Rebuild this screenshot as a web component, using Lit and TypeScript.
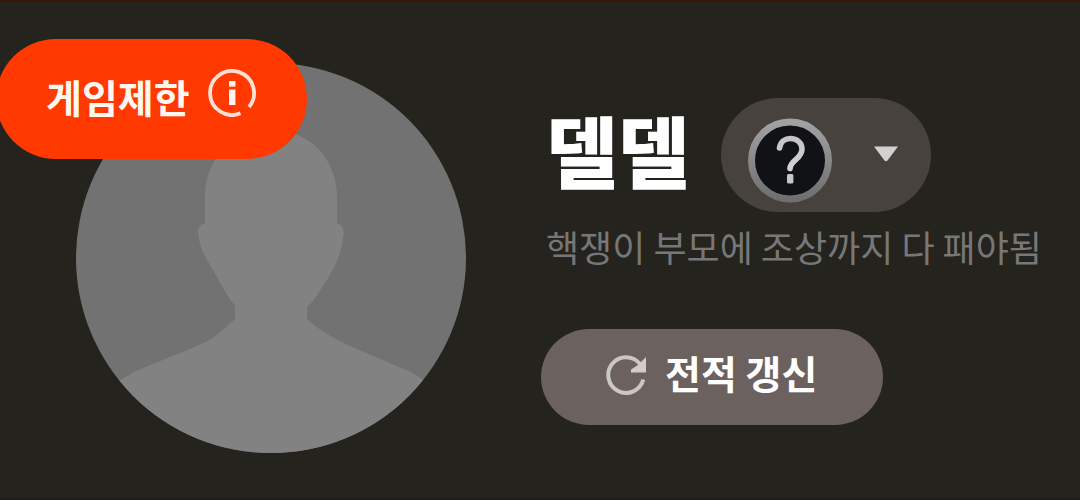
import { LitElement, html, css, svg } from "lit";
import { customElement, property } from "lit/decorators.js";

const infoIcon = svg`<svg class="info-icon" viewBox="0 0 48 48" aria-hidden="true">
  <path d="M32.500 44.300 A22 22 0 1 1 41 38" fill="none" stroke="#ffe0d4" stroke-width="3.8"/>
  <rect x="21" y="12" width="6.400" height="5.600" fill="#fff4ee"/>
  <rect x="21" y="20.500" width="6.400" height="15.500" fill="#fff4ee"/>
</svg>`;

const unrankedIcon = svg`<svg class="rank-icon" viewBox="0 0 86 86" aria-hidden="true">
  <defs>
    <linearGradient id="ring" x1="0" y1="0" x2="0" y2="1">
      <stop offset="0" stop-color="#a2a2a2"/>
      <stop offset="1" stop-color="#6f6f6f"/>
    </linearGradient>
    <linearGradient id="mark" x1="0" y1="0" x2="0" y2="1">
      <stop offset="0" stop-color="#c4c4c4"/>
      <stop offset="1" stop-color="#d2d2d2"/>
    </linearGradient>
  </defs>
  <circle cx="43" cy="43.500" r="38.500" fill="#111215" stroke="url(#ring)" stroke-width="7"/>
  <path d="M32.500 31 C33.500 24 38.500 21.500 43.500 21.500 C50 21.500 55 26 55 32 C55 42 43.500 43 43 51.500" fill="none" stroke="url(#mark)" stroke-width="5.600" stroke-linecap="round" stroke-linejoin="round"/>
  <rect x="40" y="57" width="6.400" height="9.500" rx="1.500" fill="#c6c6c6"/>
</svg>`;

const caretIcon = svg`<svg class="caret-icon" viewBox="0 0 26 16" aria-hidden="true">
  <path d="M1 0.500 H25 L14.500 14.500 Q13 16 11.500 14.500 Z" fill="#d3d1d0"/>
</svg>`;

const refreshIcon = svg`<svg class="refresh-icon" viewBox="0 0 40 40" aria-hidden="true">
  <path d="M37.300 24.600 A17.800 17.800 0 1 1 34 9" fill="none" stroke="#cbc7c6" stroke-width="4"/>
  <path d="M40 2 V17.500 H25 V14.500 L32 10 L34.500 7.500 Z" fill="#d0cdcc"/>
</svg>`;

const silhouette = svg`<svg class="silhouette" viewBox="0 0 390 390" aria-hidden="true">
  <path fill="#828282" d="M195 67 C236 67 261 98 261 134 V160 C267 162 269 167 267 176
    C265 192 259 203 251 217 L237 238 L231 244 V256 C241 266 257 275 274 283 L311 299 L335 309
    L346 316 L390 342 V390 H0 V342 L44 317 L60 308 L121 283 C138 276 147 267 159 256 V243
    L153 235 L131 197 C125 186 122 176 122 167 Q123 162 129 160 V134 C129 98 154 67 195 67 Z"/>
</svg>`;

@customElement("player-avatar")
class PlayerAvatar extends LitElement {
  @property() badge = "";

  static styles = css`
    :host { display: block; position: relative; flex: none; }
    .photo {
      width: 390px;
      height: 390px;
      border-radius: 50%;
      overflow: hidden;
      background: #727272;
    }
    .silhouette { display: block; width: 100%; height: 100%; }
    .badge {
      position: absolute;
      top: -24px;
      left: -80px;
      display: flex;
      align-items: flex-start;
      gap: 18px;
      box-sizing: border-box;
      height: 120px;
      padding: 30px 51px 0 50px;
      border: 0;
      border-radius: 60px;
      background: #ff3900;
      color: #fff8f2;
      font: 700 39px/54px "Noto Sans CJK KR", sans-serif;
      white-space: nowrap;
      cursor: pointer;
    }
    .info-icon { width: 48px; height: 48px; flex: none; }
  `;

  render() {
    return html`
      <div class="photo">${silhouette}</div>
      <button class="badge" type="button"><span>${this.badge}</span>${infoIcon}</button>
    `;
  }
}

@customElement("app-root")
class AppRoot extends LitElement {
  static styles = css`
    :host {
      display: block;
      font-family: "Noto Sans CJK KR", sans-serif;
    }
    .card {
      display: flex;
      gap: 75px;
      box-sizing: border-box;
      min-height: 100vh;
      padding: 61px 0 40px 76px;
      border-top: 2px solid #3b150b;
      border-bottom: 2px solid #1e1d19;
      background: #24231e;
      overflow: hidden;
    }
    .details {
      display: flex;
      flex-direction: column;
      align-items: flex-start;
      flex: 1;
      min-width: 0;
      padding-top: 35px;
    }
    .heading { display: flex; align-items: flex-start; gap: 31px; padding-left: 5px; }
    .name {
      margin: 0;
      color: #fff;
      font-size: 78px;
      font-weight: 900;
      line-height: 102px;
      white-space: nowrap;
    }
    .rank {
      display: flex;
      align-items: center;
      gap: 40px;
      box-sizing: border-box;
      height: 114px;
      padding: 10px 32px 0 26px;
      border: 0;
      border-radius: 57px;
      background: #48423e;
      cursor: pointer;
    }
    .rank-icon { width: 86px; height: 86px; }
    .caret-icon { width: 26px; height: 16px; margin-bottom: 12px; }
    .message {
      margin: 8px 0 0;
      padding-left: 5px;
      color: #777777;
      font-size: 36px;
      font-weight: 400;
      line-height: 52px;
      white-space: nowrap;
    }
    .refresh {
      display: flex;
      align-items: center;
      gap: 19px;
      box-sizing: border-box;
      height: 96px;
      margin-top: 57px;
      padding: 0 66px 4px 65px;
      border: 0;
      border-radius: 48px;
      background: #6b615e;
      color: #fff;
      font: 700 39px/54px "Noto Sans CJK KR", sans-serif;
      white-space: nowrap;
      cursor: pointer;
    }
    .refresh-icon { width: 40px; height: 40px; }
    .refresh-label { padding-bottom: 6px; }
  `;

  render() {
    return html`
      <section class="card">
        <player-avatar badge="게임제한"></player-avatar>
        <div class="details">
          <div class="heading">
            <h1 class="name">델델</h1>
            <button class="rank" type="button" aria-haspopup="listbox" aria-label="랭크">
              ${unrankedIcon}${caretIcon}
            </button>
          </div>
          <p class="message">핵쟁이 부모에 조상까지 다 패야됨</p>
          <button class="refresh" type="button">${refreshIcon}<span class="refresh-label">전적 갱신</span></button>
        </div>
      </section>
    `;
  }
}
